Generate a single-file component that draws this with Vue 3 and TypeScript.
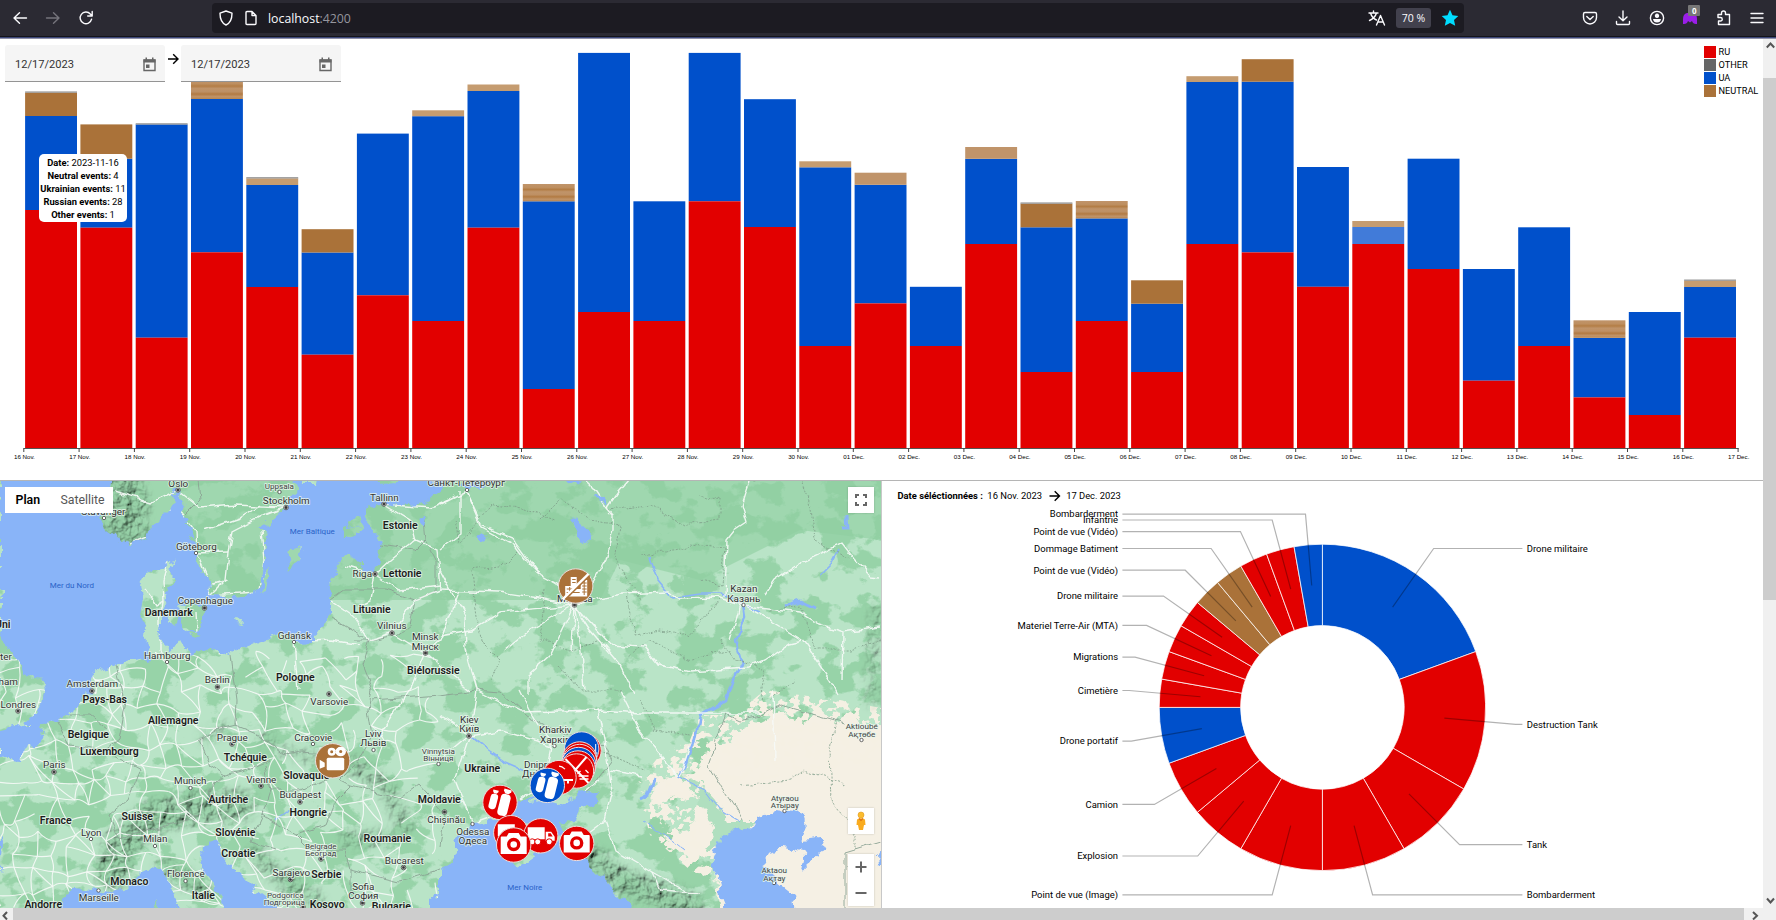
<script setup lang="ts">
type Style = 'solid' | 'light' | 'mid' | 'stripe'
interface Bar { red: number; blue: number; top?: number; style?: Style; cap?: boolean; pale?: boolean }

const base = 448.4
const pitch = 55.3
const raw: [number, number, number?, Style?, boolean?][] = [
  [210, 116, 92.6, 'solid', true], [227.7, 158.7, 124.4, 'solid'], [337.7, 124.4, undefined, undefined, true],
  [252.3, 99, 80, 'stripe'], [287, 185, 178.3, 'light', true], [354.7, 252.5, 229.2, 'solid'],
  [295.3, 133.6], [321, 116.2, 110.3, 'light'], [227.7, 91, 84.5, 'light'], [389, 201.3, 184, 'stripe'],
  [312, 52.9], [321, 201.3], [201.3, 52.9], [227, 99.2], [346, 167.3, 161.3, 'light'],
  [303.4, 184.8, 172.7, 'mid'], [346, 286.8], [244, 158.8, 147, 'mid'], [372, 227.3, 203.6, 'solid', true],
  [321, 218.4, 201, 'stripe'], [372, 303.7, 280.3, 'solid'], [244, 82, 76.2, 'light'], [252.4, 81.7, 59.2, 'solid'],
  [286.8, 167], [244, 227, 221, 'light'], [269, 158.7], [380.7, 269], [346, 227.3],
  [397.4, 337.8, 320.3, 'stripe'], [415, 312], [337.7, 287, 280.7, 'light', true],
]
const bars: Bar[] = raw.map((r, i) => ({ red: r[0], blue: r[1], top: r[2], style: r[3], cap: r[4], pale: i === 24 }))
const barW = 51.9
const barX = (i: number) => 25.1 + i * pitch
const two = (n: number) => String(n).padStart(2, '0')
const ticks = Array.from({ length: 32 }, (_, i) => (i < 15 ? `${16 + i} Nov.` : `${two(i - 14)} Dec.`))
const fills: Record<Style, string> = { solid: '#aa7239', light: '#c59c70', mid: '#c0946a', stripe: 'url(#stripe)' }

const legend = [
  { name: 'RU', color: '#e20000' }, { name: 'OTHER', color: '#666666' },
  { name: 'UA', color: '#0050cb' }, { name: 'NEUTRAL', color: '#aa7239' },
]
const tip = [['Date', '2023-11-16'], ['Neutral events', '4'], ['Ukrainian events', '11'], ['Russian events', '28'], ['Other events', '1']]

// Donut
const R = '#e20000', B = '#0050cb', N = '#aa7239'
const parts: [string, number, string][] = [
  ['Drone militaire', 7, B], ['Destruction Tank', 5, R], ['Tank', 3, R], ['Bombarderment', 3, R],
  ['Point de vue (Image)', 3, R], ['Explosion', 2, R], ['Camion', 2, R], ['Drone portatif', 2, B],
  ['Cimetière', 1, R], ['Migrations', 1, R], ['Materiel Terre-Air (MTA)', 1, R], ['Drone militaire', 1, R],
  ['Point de vue (Vidéo)', 1, N], ['Dommage Batiment', 1, N], ['Point de vue (Vidéo)', 1, R],
  ['Infantrie', 1, R], ['Bombarderment', 1, B],
]
const cx = 1322.4, cy = 707.4
const pt = (deg: number, r: number): [number, number] => {
  const a = (deg * Math.PI) / 180
  return [cx + r * Math.sin(a), cy - r * Math.cos(a)]
}
let acc = 0
const slices = parts.map(([name, n, color]) => {
  const a0 = acc * 10
  acc += n
  const a1 = acc * 10, mid = (a0 + a1) / 2
  const o = 163.2, q = 81.8
  const side = mid < 180 ? 1 : -1
  const elbow = pt(mid, 194)
  return {
    name, color, side, y: elbow[1], tx: cx + side * 204.4,
    d: `M${pt(a0, o)}A${o},${o} 0 0 1 ${pt(a1, o)}L${pt(a1, q)}A${q},${q} 0 0 0 ${pt(a0, q)}Z`,
    line: `${pt(mid, 122.4)} ${elbow} ${cx + side * 200},${elbow[1]}`,
  }
})

// Map
const seas = [
  '0,470 445,470 445,486 432,497 425,503 400,506 380,503 366,508 366,520 374,530 380,540 378,560 376,570 366,573 360,563 350,553 340,560 335,573 330,585 329,605 331,618 325,628 313,636 313,642 300,643 294,640 285,633 270,637 255,643 240,650 228,655 215,650 205,647 192,655 186,650 180,640 170,652 165,645 158,640 160,625 160,610 165,600 168,590 175,577 168,570 174,556 165,568 145,573 140,583 142,600 140,612 145,625 143,635 148,645 150,657 140,660 125,662 115,665 100,668 92,675 90,690 80,700 72,712 62,720 45,724 43,735 38,745 22,750 20,761 0,759',
  '65,908 62,898 75,888 90,890 110,893 125,888 140,872 150,867 160,870 172,885 175,900 178,915 65,915',
  '228,915 215,885 202,870 200,855 208,843 218,840 222,855 235,870 250,885 270,900 280,915',
  '430,915 430,900 440,893 440,872 455,855 455,840 470,826 490,820 510,815 514,803 540,800 560,805 580,795 598,791 597,800 580,808 575,820 560,823 570,845 575,850 590,865 605,880 620,895 634,915',
  '728,833 720,840 711,863 718,880 720,895 728,915 795,915 793,895 780,885 772,870 762,865 770,852 785,848 805,852 800,872 806,865 827,850 820,838 803,840 802,835 806,825 803,815 795,812 775,810 757,820 752,828 735,830',
  '0,833 3,840 2,860 0,875', '881,850 877,855 878,866 881,868',
  '470,480 500,480 478,488 462,488', '568,478 580,478 578,485 570,484',
  '570,518 577,516 584,526 593,533 591,542 584,544 576,532', '475,537 482,532 487,537 481,541',
  '596,491 600,493 606,506 602,505', '208,518 215,512 213,530 206,532', '224,545 232,530 234,532 227,550', '418,520 427,516 425,528 420,525',
]
const islands = [
  '112,470 105,500 101,515 105,530 118,540 130,544 145,538 155,525 165,515 175,505 173,495 178,488 183,500 185,515 190,530 196,545 196,555 200,570 210,585 209,596 235,597 256,592 260,580 262,565 265,545 267,530 255,528 272,520 285,508 290,498 299,490 290,470',
  '0,634 10,650 20,660 25,675 42,678 45,690 42,705 30,715 25,722 35,726 15,725 0,728',
  '180,606 192,600 205,606 203,622 196,634 184,626', '167,612 178,614 177,625 168,622', '190,633 200,636 194,640 187,637',
  '288,560 290,550 302,546 297,560 290,573', '270,565 266,590 262,592 265,575',
  '343,528 362,524 355,535 345,540', '348,519 358,516 360,524 350,526', '236,620 243,621 242,625 237,624',
  '498,834 515,823 535,822 562,836 550,848 532,857 518,867 508,855', '156,908 158,898 161,910', '300,470 318,470 315,482 302,482', '376,470 400,470 396,483 380,484',
]
const dry = '890,722 868,728 850,712 835,722 820,708 800,722 780,712 760,722 738,728 730,745 712,745 705,760 692,775 668,776 650,792 660,808 676,790 700,800 690,830 664,838 690,858 712,855 722,925 890,925'
const delta = '676,774 700,782 716,800 728,822 755,822 745,832 730,833 705,860 714,828 696,796'
const steppe = '636,785 660,755 690,740 700,715 735,715 765,690 800,695 840,700 881,708 881,760 700,790 700,830 730,890 690,870 650,835'

const fixedRoads = [
  '467,492 483,525 512,537 538,573 556,583 574,605', '467,492 482,527 515,545 530,565 540,575', '440,590 500,592 540,598 574,605', '574,605 600,598 620,594 670,592 680,598 717,597 743,605',
  '743,605 760,607 800,612 820,625 843,632 881,627', '725,597 727,540 735,530 747,522 742,505 750,480', '740,605 733,630 730,640', '743,605 770,620 803,640 830,680 838,695', '765,595 775,580 805,560 842,543 855,560 870,577 881,578',
  '593,582 605,560 613,530 613,515 607,508 595,490 585,480', '607,508 618,492 630,478', '574,605 572,650', '574,605 580,640 584,690', '574,605 590,630 620,665 635,695', '574,605 610,645 645,647 660,665 690,672 747,668 765,660 790,643 803,640',
  '574,605 550,655 528,675 528,695', '574,605 530,630 505,650', '574,605 500,612 470,630 440,635', '440,505 467,492', '460,490 460,535 440,550', '440,570 465,618 466,650 477,690 470,735', '477,690 520,712 600,710 640,713 762,713',
  '470,735 500,730 552,746', '520,690 530,710 552,746', '597,708 604,740 612,790 605,820 615,850 652,872 690,893', '620,690 640,730 678,777', '552,746 545,780 520,800', '440,715 470,735 440,760', '470,735 455,780 472,824', '472,824 500,814 560,817', '600,780 570,805 545,810', '605,820 585,835', '610,770 640,776', '843,632 842,680', '680,777 690,745', '773,690 775,760', '652,872 660,890 700,893',
  '384,504 410,520 415,540 390,560 375,574', '384,504 430,508 450,500', '375,574 400,590 440,585', '375,574 370,600 360,605', '332,602 355,618 370,640 392,633', '392,633 425,653 470,690', '425,653 440,640 460,590', '425,653 410,690 380,735', '415,540 437,550 440,590', '345,565 375,574', '294,642 330,640 360,645', '294,642 298,690', '392,633 415,600 440,590',
  '178,490 180,510 195,530 196,553 208,580 210,596', '196,553 228,552', '178,490 200,508 235,505 286,507', '228,552 225,580 210,595 256,592', '228,552 232,532 265,515 286,507', '178,490 150,503 115,492', '130,543 150,535 172,510', '205,530 240,518 260,505', '262,530 265,560 260,590', '210,585 228,580', '168,558 162,580 163,600 160,620 160,650 167,662', '145,590 155,605 163,600', '160,612 190,610', '196,612 197,632',
]
const borders = [
  '198,480 200,500 185,515', '423,520 425,540 415,550 380,545 378,548', '425,540 435,560 435,592 415,600 385,590 345,590 331,600', '415,600 410,625 397,635 370,640 360,635 330,618', '354,640 370,640 362,665 372,690 368,710 372,735 355,765 340,780 350,785 400,798',
  '230,655 232,670 236,700 235,725', '236,725 215,730 199,740 210,765 225,775 245,770 270,760', '235,725 260,735 285,755 300,752 340,755', '225,775 208,790 212,800', '265,765 270,790 262,815 295,835 325,825 335,800 350,785', '270,790 300,790 335,775', '125,700 115,665', '58,722 70,745 105,750 118,740 125,700', '105,750 140,770 128,800 110,815', '110,815 118,838 160,828 200,815', '70,715 90,715 108,730', '262,815 250,842 275,850', '295,835 310,850 345,850 350,870 350,895', '350,870 400,882 440,870', '400,798 418,785 445,815 440,845', '476,690 440,695 372,700', '476,690 500,692 525,715 565,735', '565,735 605,745 612,760 590,790 578,800', '762,715 740,720 725,713 718,735 708,765 720,785 735,808 742,820', '762,715 780,705 805,712 845,723', '845,853 881,842', '845,853 845,908',
]
const dashes = [
  '455,520 460,545 490,505 520,508 555,520', '475,600 472,570 505,565 520,550', '540,520 560,500 590,520 620,525 615,560 640,600', '608,510 650,505 685,525 720,520 720,500 700,495', '710,478 745,480 800,475 810,500 815,540 850,560', '640,555 680,550 690,545 725,548 722,585 700,580', '625,590 635,635 660,630 690,635 720,600', '475,600 480,640 500,660 490,680', '545,590 540,640 570,650 600,640', '625,660 650,640 690,660 730,650', '560,665 580,690 620,690', '720,640 735,660 765,670 760,700', '770,610 800,605 815,650 850,650 881,640', '795,680 770,700', '640,700 655,730 690,735', '590,750 610,755 645,770', '740,785 790,780 805,770 845,785', '835,720 830,750 832,800 855,835 855,850',
]
let seed = 29
const rnd = () => (seed = (seed * 1103515245 + 12345) % 2147483648) / 2147483648
const mesh: string[] = []
const step = 18
const cols = 25, rowsN = 15
const nodes = Array.from({ length: cols * rowsN }, (_, i) => [
  (i % cols) * step + (rnd() - 0.5) * 15, 655 + Math.floor(i / cols) * step + (rnd() - 0.5) * 15,
])
for (let r = 0; r < rowsN; r++) for (let c = 0; c < cols; c++) {
  const a = nodes[r * cols + c]
  const dens = c < 14 ? 0.8 : 0.5
  const link = (b: number[] | undefined, p: number) => {
    if (!b || rnd() > p) return
    mesh.push(`M${a}Q${(a[0] + b[0]) / 2 + (rnd() - 0.5) * 9},${(a[1] + b[1]) / 2 + (rnd() - 0.5) * 9} ${b}`)
  }
  if (c < cols - 1) link(nodes[r * cols + c + 1], dens)
  if (r < rowsN - 1) link(nodes[(r + 1) * cols + c], dens)
  if (c < cols - 1 && r < rowsN - 1) link(nodes[(r + 1) * cols + c + 1], dens * 0.3)
}

type Label = [number, number, string]
const cities: Label[] = [
  [178, 483.5, 'Oslo'], [286, 500.5, 'Stockholm'], [384, 497.5, 'Tallinn'], [466, 482.5, 'Санкт-Петербург'], [196, 547, 'Göteborg'],
  [362, 574, 'Riga'], [205, 601, 'Copenhague'], [391.5, 626, 'Vilnius'], [294, 635.5, 'Gdańsk'], [425, 637, 'Minsk'], [425, 646.5, 'Мінск'],
  [167, 655.5, 'Hambourg'], [217, 680, 'Berlin'], [92, 684, 'Amsterdam'], [103, 512, 'Stavanger'], [18, 704.5, 'Londres'], [54, 765, 'Paris'],
  [329, 702, 'Varsovie'], [232, 737.5, 'Prague'], [313, 738, 'Cracovie'], [373, 734, 'Lviv'], [373, 743, 'Львів'], [190, 781, 'Munich'],
  [261, 779.5, 'Vienne'], [300, 795, 'Budapest'], [91, 833, 'Lyon'], [155, 839, 'Milan'], [404, 860.5, 'Bucarest'], [185.5, 874, 'Florence'],
  [291, 872.5, 'Sarajevo'], [363, 886.5, 'Sofia'], [363, 896, 'София'], [98.5, 898, 'Marseille'], [469, 720, 'Kiev'], [469, 729, 'Київ'],
  [555, 730, 'Kharkiv'], [555, 739.5, 'Харків'], [538, 765, 'Dnipro'], [538, 774, 'Дніпро'], [446, 820, 'Chișinău'], [472.5, 832, 'Odessa'], [472.5, 841, 'Одеса'],
  [743.5, 589, 'Kazan'], [743.5, 598.5, 'Казань'], [574.5, 599, 'Москва'], [-14.5, 656.5, 'Manchester'], [-9, 681.5, 'Birmingham'],
]
const small: Label[] = [
  [279, 486, 'Uppsala'], [438, 751, 'Vinnytsia'], [438, 758, 'Вінниця'], [320.5, 846, 'Belgrade'], [320.5, 853.5, 'Београд'],
  [285, 895.5, 'Podgorica'], [284, 902, 'Подгорица'], [861.5, 726.5, 'Aktioubé'], [861.5, 734, 'Ақтөбе'],
  [784.5, 798, 'Atyraou'], [784.5, 805, 'Атырау'], [774, 870.5, 'Aktaou'], [774, 878, 'Ақтау'],
]
const countries: Label[] = [
  [400, 525.5, 'Estonie'], [402, 573.5, 'Lettonie'], [371.5, 610, 'Lituanie'], [433, 670.5, 'Biélorussie'], [168.5, 612.5, 'Danemark'],
  [295, 677.5, 'Pologne'], [104.5, 699.5, 'Pays-Bas'], [173, 721, 'Allemagne'], [88, 734.5, 'Belgique'], [109, 751.5, 'Luxembourg'],
  [245, 757.5, 'Tchéquie'], [306, 776, 'Slovaquie'], [228, 800, 'Autriche'], [308, 813, 'Hongrie'], [55.5, 821, 'France'], [137, 817, 'Suisse'],
  [235, 833, 'Slovénie'], [238, 854, 'Croatie'], [387, 839, 'Roumanie'], [326, 874.5, 'Serbie'], [129, 881.5, 'Monaco'], [203, 896, 'Italie'],
  [43, 905, 'Andorre'], [327, 904.5, 'Kosovo'], [391, 906.5, 'Bulgarie'], [439, 799.5, 'Moldavie'], [482, 769, 'Ukraine'], [2.5, 625, 'Uni'],
]
const waters: Label[] = [[71.5, 586, 'Mer du Nord'], [312, 531.5, 'Mer Baltique'], [524.5, 888, 'Mer Noire']]
const capitals = [[178, 490], [286, 507.5], [384, 504], [375, 574], [204.5, 608], [392, 633], [425.5, 653], [217.5, 687], [92, 691], [18, 711], [54, 772], [329, 694], [232, 744], [261, 786], [300, 802], [321, 859], [403.5, 867.5], [290.5, 879.5], [362.5, 903], [303, 907], [469, 736], [444.5, 812], [574.5, 605]]
const towns = [[279.5, 492], [467, 490], [196, 553], [294, 642], [167, 662], [104, 518], [313, 744], [373.5, 750], [438.5, 764], [190.5, 788], [91, 839], [155, 846], [185.5, 881], [98.5, 890.5], [554.5, 746], [472.5, 824], [743.5, 605], [861.5, 740], [784.5, 811], [774, 883]]
const pins: [number, number, string, string][] = [
  [584, 750.5, R, ''], [581.7, 749, B, 'drone'], [579.6, 759, R, ''], [579.6, 761.5, R, 'gun'], [578.6, 764.5, B, 'gun'], [578, 768, R, ''],
  [576.5, 771, R, 'slash'], [559, 777.6, R, 'gun'], [547.3, 785.4, B, 'shell'], [500, 802.4, R, 'shell'],
  [510.8, 832.7, R, 'truck'], [540.7, 835.8, R, 'truck'], [513.7, 845, R, 'photo'], [576.7, 843.4, R, 'photo'],
  [332.7, 760.8, N, 'cine'], [575.7, 586, N, 'city'],
]
</script>

<template>
  <div class="window">
    <header class="chrome">
      <nav class="nav">
        <svg width="16" height="16" viewBox="0 0 16 16"><path d="M14.500 8H2M7.500 2.800 2 8l5.500 5.200" /></svg>
        <svg class="dim" width="16" height="16" viewBox="0 0 16 16"><path d="M1.500 8H14M8.500 2.800 14 8l-5.500 5.200" /></svg>
        <svg width="16" height="16" viewBox="0 0 16 16"><path d="M13.600 9.200A5.800 5.800 0 1 1 12.300 4L14 5.800M14.200 1.500V6H9.700" /></svg>
      </nav>
      <div class="url">
        <svg width="16" height="16" viewBox="0 0 16 16"><path d="M8 1 14 3.200C14 9 12.500 13 8 15 3.500 13 2 9 2 3.200Z" /></svg>
        <svg class="doc" width="14" height="16" viewBox="0 0 14 16"><path d="M2 2.500Q2 1.500 3 1.500H8L12 5.500V13.500Q12 14.500 11 14.500H3Q2 14.500 2 13.500ZM8 1.500V5.500H12" /></svg>
        <span class="host">localhost<i>:4200</i></span>
        <svg class="push" width="18" height="16" viewBox="0 0 18 16"><path d="M1 3H10M5.500 1V3M2.500 3Q4 8 8.500 10M8.500 3Q7 8 1.500 10.500M8.500 15 12.500 5.500 16.500 15M10 12H15" /></svg>
        <span class="zoom">70 %</span>
        <svg class="star" width="18" height="18" viewBox="0 0 18 18"><path d="M9 .8 11.500 6.200 17.300 6.900 13 11 14.200 16.800 9 13.900 3.800 16.800 5 11 .7 6.900 6.500 6.200Z" /></svg>
      </div>
      <div class="tools">
        <svg width="16" height="16" viewBox="0 0 16 16"><path d="M3 2.500H13Q14.500 2.500 14.500 4V7.500A6.500 6.500 0 0 1 1.500 7.500V4Q1.500 2.500 3 2.500ZM4.800 6.500 8 9.500 11.200 6.500" /></svg>
        <svg width="16" height="16" viewBox="0 0 16 16"><path d="M8 1V10.500M4 7 8 10.800 12 7M1.500 11.500V13.500Q1.500 14.500 2.500 14.500H13.500Q14.500 14.500 14.500 13.500V11.500" /></svg>
        <svg width="16" height="16" viewBox="0 0 16 16"><circle cx="8" cy="8" r="6.600" /><path class="full" d="M8 3.600A2.200 2.200 0 1 1 7.990 3.600M4 9H12Q11.500 12.500 8 12.500T4 9" /></svg>
        <span class="addon"><svg width="16" height="16" viewBox="0 0 16 16"><path d="M1 9Q1 4 5 3L11 3Q15 4 15 9V14Q11 14.500 10 11L8 12.500 6 11Q5 14.500 1 14Z" /></svg><b>0</b></span>
        <svg width="16" height="16" viewBox="0 0 16 16"><path d="M2 4.500H5.500V3A1.800 1.800 0 0 1 9.500 3V4.500H13.500V14.500H2.500V11H4.500A1.700 1.700 0 0 0 4.500 7.500H2Z" /></svg>
        <svg width="14" height="16" viewBox="0 0 14 16"><path d="M1 3.500H13M1 8H13M1 12.500H13" /></svg>
      </div>
    </header>

    <div class="body">
      <main class="page">
        <section class="timeline">
          <svg class="chart" width="1763" height="441" viewBox="0 39 1763 441">
            <defs>
              <linearGradient id="stripe" x1="0" y1="0" x2="0" y2="1">
                <stop offset="0" stop-color="#c0946a" /><stop offset=".2" stop-color="#be8f60" /><stop offset=".32" stop-color="#b37d45" />
                <stop offset=".45" stop-color="#c0946a" /><stop offset=".62" stop-color="#be9064" /><stop offset=".74" stop-color="#b27a42" /><stop offset=".88" stop-color="#c0946a" /><stop offset="1" stop-color="#b7854f" />
              </linearGradient>
            </defs>
            <g v-for="(b, i) in bars" :key="i">
              <rect :x="barX(i)" :y="b.blue" :width="barW" :height="b.red - b.blue" :fill="b.pale ? '#417bd9' : '#0050cb'" />
              <rect :x="barX(i)" :y="b.red" :width="barW" :height="base - b.red" fill="#e20000" />
              <rect v-if="b.top && b.style" :x="barX(i)" :y="b.top" :width="barW" :height="b.blue - b.top" :fill="fills[b.style]" />
              <rect v-if="b.cap" :x="barX(i)" :y="(b.top || b.blue) - 1.2" :width="barW" height="1.4" fill="#999" />
            </g>
            <path d="M23.800 448.500H1738.500" stroke="#555" stroke-width="1" />
            <g v-for="(t, i) in ticks" :key="t">
              <path :d="`M${23.8 + i * pitch} 448v4`" stroke="#444" stroke-width="1" />
              <text class="tick" :x="24.4 + i * pitch" y="459.400">{{ t }}</text>
            </g>
          </svg>
          <div class="dates">
            <div v-for="n in 2" :key="n" class="date">
              <span>12/17/2023</span>
              <svg width="13" height="15" viewBox="0 0 13 15"><path d="M1 3H12V13.500H1Z" fill="none" stroke="#666" stroke-width="1.400" /><path d="M.5 2.500H12.500V5.500H.5ZM2.500.5H4V3H2.500ZM9 .5H10.500V3H9ZM3 7.500H6.500V11H3Z" fill="#666" /></svg>
            </div>
            <svg class="arrow" width="11" height="12" viewBox="0 0 11 12"><path d="M0 6H10M5.200 1.200 10 6 5.200 10.800" /></svg>
          </div>
          <div class="tip"><p v-for="t in tip" :key="t[0]"><b>{{ t[0] }}:</b> {{ t[1] }}</p></div>
          <ul class="legend"><li v-for="l in legend" :key="l.name"><i :style="{ background: l.color }"></i>{{ l.name }}</li></ul>
        </section>

        <div class="lower">
          <section class="map">
            <svg width="881" height="427" viewBox="0 481 881 427">
              <defs>
                <filter id="veg" x="0" y="0" width="100%" height="100%" color-interpolation-filters="sRGB">
                  <feTurbulence type="fractalNoise" baseFrequency=".028 .035" numOctaves="5" seed="8" />
                  <feColorMatrix values="0 0 0 0 .56  0 0 0 0 .81  0 0 0 0 .63  16 0 0 0 -8.100" />
                </filter>
                <filter id="relief" x="0" y="0" width="100%" height="100%">
                  <feTurbulence type="fractalNoise" baseFrequency=".1" numOctaves="4" seed="3" result="n" />
                  <feColorMatrix in="n" values="0 0 0 0 0  0 0 0 0 0  0 0 0 0 0  1 0 0 0 0" />
                  <feDiffuseLighting surfaceScale="6" diffuseConstant="1.100" lighting-color="#93cba3"><feDistantLight azimuth="225" elevation="52" /></feDiffuseLighting>
                </filter>
                <filter id="specks" x="0" y="0" width="100%" height="100%" color-interpolation-filters="sRGB">
                  <feTurbulence type="fractalNoise" baseFrequency=".1 .12" numOctaves="3" seed="14" />
                  <feColorMatrix values="0 0 0 0 .96  0 0 0 0 .94  0 0 0 0 .89  22 0 0 0 -11.300" />
                </filter>
                <filter id="coast" x="-5%" y="-5%" width="110%" height="110%" color-interpolation-filters="sRGB">
                  <feTurbulence type="fractalNoise" baseFrequency=".09" numOctaves="4" seed="5" />
                  <feDisplacementMap in="SourceGraphic" scale="12" xChannelSelector="R" yChannelSelector="G" />
                </filter>
                <filter id="wiggle" x="-5%" y="-5%" width="110%" height="110%" color-interpolation-filters="sRGB">
                  <feTurbulence type="fractalNoise" baseFrequency=".07" numOctaves="2" seed="7" />
                  <feDisplacementMap in="SourceGraphic" scale="8" xChannelSelector="R" yChannelSelector="G" />
                </filter>
                <filter id="soft"><feGaussianBlur stdDeviation="5" /></filter>
                <clipPath id="steppe"><polygon :points="steppe" /></clipPath>
                <mask id="land" maskUnits="userSpaceOnUse" x="-10" y="470" width="901" height="450">
                  <g filter="url(#coast)">
                    <rect x="-20" y="460" width="921" height="470" fill="#fff" />
                    <polygon v-for="(s, i) in seas" :key="i" :points="s" fill="#000" />
                    <polygon v-for="(s, i) in islands" :key="'i' + i" :points="s" fill="#fff" />
                  </g>
                </mask>
                <mask id="hills" maskUnits="userSpaceOnUse" x="-10" y="470" width="901" height="450">
                  <g fill="none" stroke="#fff" stroke-linecap="round" stroke-linejoin="round" filter="url(#soft)">
                    <path d="M115 470 128 505 125 530" stroke-width="40" />
                    <path d="M112 875 118 845 150 818 195 808 240 805" stroke-width="30" />
                    <path d="M350 765 385 785 405 825 M385 838 348 838" stroke-width="16" stroke-opacity=".7" />
                    <path d="M255 855 295 890 315 900M165 868 205 890" stroke-width="17" stroke-opacity=".7" />
                    <path d="M590 858 620 880 690 905" stroke-width="24" />
                    <path d="M876 610 872 700M290 752 330 765M205 738 225 728M262 735 280 750" stroke-width="12" stroke-opacity=".5" />
                  </g>
                </mask>
              </defs>
              <rect y="481" width="881" height="427" fill="#89b4f8" />
              <g mask="url(#land)">
                <rect y="470" width="881" height="450" fill="#b9e4c7" />
                <path d="M110 470H300V600H190V540L110 545ZM330 470H881V540L800 530 700 580 620 560 600 600 330 600Z" fill="#94d2a5" opacity=".7" />
                <rect y="470" width="881" height="450" filter="url(#veg)" opacity=".8" />
                <g filter="url(#coast)"><polygon :points="dry" fill="#f5f0e4" /><polygon :points="delta" fill="#b0dfbf" /></g>
                <g clip-path="url(#steppe)"><rect x="630" y="680" width="251" height="215" filter="url(#specks)" /></g>
                <g mask="url(#hills)" opacity=".85"><rect y="470" width="881" height="450" filter="url(#relief)" /></g>
                <g class="river" filter="url(#wiggle)">
                  <polyline points="743,605 745,618 735,640 742,665 733,680 726,700 700,715 695,740 685,765 678,778" stroke-width="2.600" />
                  <polyline points="680,778 705,790 720,810 740,822" stroke-width="1.200" />
                  <polyline points="650,555 658,580 672,597 700,593 720,593 743,605 760,612" stroke-width="1.600" />
                  <polyline points="785,606 800,601 815,608" stroke-width="3" /><polyline points="820,575 830,565 838,550" stroke-width="1.600" />
                  <polyline points="847,515 848,528 842,528" stroke-width="3" />
                  <polyline points="470,735 488,750 505,762 535,775 545,790 522,802 508,812" stroke-width="1.800" />
                  <polyline points="655,777 648,795 640,799" stroke-width="3" />
                  <polyline points="643,822 665,835 685,850" stroke-width="1" /><polyline points="275,820 290,810" stroke-width="1.500" />
                </g>
                <g class="dash" filter="url(#wiggle)"><polyline v-for="(d, i) in dashes" :key="i" :points="d" /></g>
                <g class="mesh"><path v-for="(d, i) in mesh" :key="i" :d="d" /></g>
                <g class="border" filter="url(#wiggle)"><polyline v-for="(d, i) in borders" :key="i" :points="d" /></g>
                <g class="road" filter="url(#wiggle)"><polyline v-for="(d, i) in fixedRoads" :key="i" :points="d" /></g>
              </g>
              <g class="town"><circle v-for="(t, i) in towns" :key="i" :cx="t[0]" :cy="t[1]" r="1.700" /></g>
              <g class="capital"><g v-for="(t, i) in capitals" :key="i"><circle :cx="t[0]" :cy="t[1]" r="2.300" /><circle class="core" :cx="t[0]" :cy="t[1]" r="1.200" /></g></g>
              <g transform="translate(.3 -.3)">
                <g class="label city"><text v-for="(l, i) in cities" :key="i" :x="l[0]" :y="l[1]" dy=".35em">{{ l[2] }}</text></g>
                <g class="label small"><text v-for="(l, i) in small" :key="i" :x="l[0]" :y="l[1]" dy=".35em">{{ l[2] }}</text></g>
                <g class="label country"><text v-for="(l, i) in countries" :key="i" :x="l[0]" :y="l[1]" dy=".35em">{{ l[2] }}</text></g>
                <g class="label water"><text v-for="(l, i) in waters" :key="i" :x="l[0]" :y="l[1]" dy=".35em">{{ l[2] }}</text></g>
              </g>
              <g v-for="(p, i) in pins" :key="'p' + i" :transform="`translate(${p[0]} ${p[1]})`">
                <circle r="17.200" :fill="p[2]" stroke="#eadfdf" stroke-width="1" />
                <g v-if="p[3] === 'photo'"><path d="M-12-8.500H-7L-5-12H5L7-8.500H12Q13-8.500 13-7.500V9H-13V-7.500Q-13-8.500-12-8.500Z" fill="#fff" /><circle r="5" cy="-.5" fill="none" :stroke="p[2]" stroke-width="3.400" /></g>
                <g v-else-if="p[3] === 'truck'"><path d="M-13-8.500H4V3.500H-13ZM5-4H10.500L14 1V5H5Z" fill="#fff" /><path d="M7.500-2.500H10L12 .8H7.500Z" :fill="p[2]" /><g fill="#fff" :stroke="p[2]"><circle cx="-8.500" cy="6" r="3" /><circle cx="-3" cy="6" r="3" /><circle cx="8.500" cy="6" r="3" /></g></g>
                <g v-else-if="p[3] === 'shell'" fill="#fff"><g transform="rotate(14)"><rect x="-10.500" y="-7" width="7.500" height="15.500" rx="3.200" /><path d="M-9.500-11H-4V-9.500L-5.500-7.500H-8L-9.500-9.500Z" /><rect x="-.5" y="-9.500" width="10" height="22" rx="4" /><path d="M1-14.500H8.500V-12.500L6.500-10H3L1-12.500Z" /></g></g>
                <g v-else-if="p[3] === 'cine'" fill="#fff"><rect x="-6" y="-3" width="17.500" height="12.500" rx="1.500" /><path d="M-13-1-8 2V6L-13 8Z" /><path d="M-1-13A4 4 0 1 0-1-5A4 4 0 1 0-1-13M-1-10.500A1.500 1.500 0 1 1-1-7.500A1.500 1.500 0 1 1-1-10.500M8-14A4.800 4.300 0 1 0 8-4.500A4.800 4.300 0 1 0 8-14M8-10.800A1.600 1.500 0 1 1 8-7.800A1.600 1.500 0 1 1 8-10.800" fill-rule="evenodd" /></g>
                <g v-else-if="p[3] === 'city'"><path d="M-10.500 0H-5V-9H1V3H5V-6H11.500V10.500H-10.500Z" fill="#fff" /><path d="M-9 3H-1M-9 6.500H4M-3.500-6.500H0M-3.500-3.500H0M6.500-3H11M6.500 0H11M6.500 3H11M6.500 6H11M-6 1V10M8.500-5V9" :stroke="p[2]" stroke-width="1" /><path d="M-13 13.500 13-12" stroke="#fff" stroke-width="2.800" /><path d="M-10.500 13.500 14-10.500" :stroke="p[2]" stroke-width="1.500" /></g>
                <g v-else-if="p[3] === 'slash'" fill="none" stroke="#fff"><path d="M-11-12 12 12M-3 1 10-14" stroke-width="2" /><path d="M2 5H12M3 8H12M9-1 12 2M1 3 4 0" stroke-width="1.300" /></g>
                <g v-else-if="p[3] === 'gun'" stroke="#fff" fill="none"><path d="M0-11.500Q3-11.500 6-8.500" stroke-width="1.200" /><path d="M2 2.500H14M9 2V6" stroke-width="2" /></g>
                <path v-else-if="p[3] === 'drone'" d="M14-5V5M12 4H16" stroke="#fff" stroke-width="1" />
              </g>
            </svg>
            <div class="types"><b>Plan</b><span>Satellite</span></div>
            <button class="ctl fs"><svg width="12" height="12" viewBox="0 0 12 12"><path d="M1 4V1H4M8 1H11V4M11 8V11H8M4 11H1V8" /></svg></button>
            <button class="ctl peg"><svg width="14" height="20" viewBox="0 0 14 20"><circle cx="7" cy="4" r="3" fill="#fbbc2d" stroke="#e09a20" stroke-width=".6" /><path d="M3 8.500Q7 6 11 8.500L11.500 14H10L9 19H5L4 14H2.500Z" fill="#f9ab1f" /><path d="M5 7.500 7 9.500 9 7.500" fill="none" stroke="#df7413" stroke-width="1.200" /></svg></button>
            <div class="ctl zoomer"><svg width="26" height="52" viewBox="0 0 26 52"><path d="M7.500 13H18.500M13 7.500V18.500M7.500 39H18.500" /></svg></div>
          </section>

          <section class="donut">
            <p class="range"><b>Date séléctionnées :</b><span>16 Nov. 2023</span><svg width="12" height="12" viewBox="0 0 11 12"><path d="M0 6H10M5.200 1.200 10 6 5.200 10.800" /></svg><span>17 Dec. 2023</span></p>
            <svg class="pie" width="881" height="427" viewBox="882 481 881 427">
              <path v-for="(s, i) in slices" :key="i" :d="s.d" :fill="s.color" stroke="#fff" stroke-opacity=".75" stroke-width="1" />
              <g v-for="(s, i) in slices" :key="'l' + i">
                <polyline :points="s.line" fill="none" stroke="#000" stroke-opacity=".3" stroke-width="1.200" />
                <text class="name" :x="s.tx" :y="s.y" dy=".35em" :text-anchor="s.side > 0 ? 'start' : 'end'">{{ s.name }}</text>
              </g>
            </svg>
          </section>
        </div>
      </main>
      <aside class="vbar">
        <svg width="13" height="13" viewBox="0 0 13 13"><path d="M3.800 8.500 7.500 4.500 11.200 8.500" /></svg>
        <i></i>
        <svg class="down" width="13" height="13" viewBox="0 0 13 13"><path d="M4 4.500 7.500 8.500 11 4.500" /></svg>
      </aside>
    </div>
    <footer class="hbar">
      <svg width="13" height="12" viewBox="0 0 13 12"><path d="M7 4 3.500 7.800 7 11.500" /></svg>
      <i></i>
      <svg width="19" height="12" viewBox="0 0 19 12"><path d="M9 4 13 7.800 9 11.500" /></svg>
    </footer>
  </div>
</template>

<style>
html, body { margin: 0; overflow: hidden; }
</style>
<style scoped>
.window { width: 1776px; height: 920px; display: flex; flex-direction: column; overflow: hidden; background: #fff; font-family: Roboto, sans-serif; color: #000; }
.window svg { display: block; flex: none; }
.chrome { height: 39px; box-sizing: border-box; background: #2b2a33; display: flex; align-items: flex-start; box-shadow: inset 0 -1px #8e90a8, inset 0 -2px #3c4778, inset 0 -3px #14141a; flex: none; }
.chrome svg { fill: none; stroke: #fbfbfe; stroke-width: 1.4; stroke-linejoin: round; stroke-linecap: round; }
.nav { width: 200px; padding: 10px 0 0 12px; display: flex; gap: 17px; }
.nav .dim { stroke: #75747c; }
.url { width: 1252px; height: 30px; margin-top: 3px; box-sizing: border-box; padding: 0 5px 0 6px; background: #1c1b22; border-radius: 4px; display: flex; align-items: center; }
.doc { margin-left: 10px; }
.host { margin-left: 10px; font: 12.3px "Open Sans", sans-serif; color: #fbfbfe; }
.host i { font-style: normal; color: #96959e; }
.push { margin-left: auto; }
.zoom { width: 35px; height: 20px; margin: 0 10px; background: #42414d; border-radius: 3px; color: #fbfbfe; font: 10.5px/20px "Open Sans", sans-serif; text-align: center; }
.url .star { fill: #00ddff; stroke: none; }
.tools { margin-left: auto; padding: 10px 12.500px 0 0; display: flex; gap: 17.600px; }
.tools .full { fill: #fbfbfe; stroke: none; }
.addon { position: relative; }
.addon svg { fill: #9a1ee8; stroke: none; }
.addon b { position: absolute; left: 6px; top: -5px; width: 12px; height: 11px; background: #777; color: #fff; font: bold 8px/11px "Open Sans", sans-serif; text-align: center; border-radius: 1px; }
.body { flex: 1; display: flex; min-height: 0; }
.page { width: 1763px; }
.timeline { position: relative; height: 441px; }
.tick { font: 6.2px "Liberation Sans", Arial, sans-serif; text-anchor: middle; fill: #000; }
.dates { position: absolute; left: 5px; top: 6px; display: flex; gap: 16px; }
.date { width: 160px; height: 37px; box-sizing: border-box; padding: 2px 9px 0 10px; background: #f5f5f5; border-bottom: 1px solid #949494; border-radius: 3px 3px 0 0; display: flex; align-items: center; justify-content: space-between; font-size: 11.1px; color: #333; }
.arrow { position: absolute; left: 163px; top: 8px; }
.arrow, .range svg { fill: none; stroke: #000; stroke-width: 1.4; }
.tip { position: absolute; left: 39px; top: 115px; width: 88px; height: 68px; box-sizing: border-box; padding-top: 1.500px; background: #fff; border-radius: 5px; font-size: 9.350px; line-height: 13px; text-align: center; white-space: nowrap; }
.tip p { margin: 0; }
.legend { position: absolute; left: 1704px; top: 6px; margin: 0; padding: 0; list-style: none; font-size: 9.200px; }
.legend li { height: 13px; display: flex; align-items: center; gap: 3px; }
.legend i { width: 11.500px; height: 12px; }
.lower { height: 428px; box-sizing: border-box; border-top: 1px solid #b5b5b5; display: flex; }
.map { position: relative; width: 881px; border-right: 1px solid #c8c8c8; overflow: hidden; }
.river { fill: none; stroke: #89b4f8; stroke-linejoin: round; }
.mesh, .road { fill: none; stroke: #f6faf7; stroke-width: 1.150; stroke-opacity: .9; }
.road { stroke-width: 1.400; }
.border { fill: none; stroke: #8ba394; stroke-width: .9; }
.dash { fill: none; stroke: #7f9d89; stroke-width: .8; stroke-dasharray: 2 1.500; }
.town { fill: #fff; stroke: #444; stroke-width: .8; }
.capital { fill: #fff; stroke: #444; stroke-width: .8; }
.capital .core { fill: #333; }
.label { text-anchor: middle; paint-order: stroke; stroke: #e8f6ec; stroke-width: 1.800px; stroke-linejoin: round; stroke-opacity: .8; fill: #333; }
.city { font-size: 9.900px; }
.small { font-size: 8.100px; fill: #444; }
.country { font-size: 10.500px; font-weight: 600; fill: #1c1c1c; }
.water { font-size: 8px; fill: #2a63c8; stroke: none; }
.types { position: absolute; left: 5px; top: 6px; width: 108px; height: 26px; background: #fff; display: flex; align-items: center; font-size: 12.300px; color: #565656; }
.types b { font-weight: 600; color: #000; width: 33px; margin-left: 10.500px; }
.types span { margin-left: 12px; }
.ctl { position: absolute; right: 7px; width: 26px; height: 26px; padding: 0; border: 0; background: #fff; display: flex; align-items: center; justify-content: center; box-shadow: 0 0 2px #0003; }
.ctl > svg { fill: none; stroke: #666; stroke-width: 2; }
.fs { top: 6px; }
.peg { top: 327px; }
.peg > svg { stroke: none; }
.zoomer { top: 373px; height: 52px; }
.donut { position: relative; width: 881px; }
.range { position: absolute; left: 15.500px; top: 8px; margin: 0; display: flex; align-items: center; font-size: 9.400px; line-height: 13px; white-space: nowrap; }
.range span { margin-left: 4.500px; }
.range svg { margin: 0 1px 0 6.500px; }
.name { font-size: 9.450px; fill: #000; }
.vbar { width: 13px; background: #f0f0f0; display: flex; flex-direction: column; }
.vbar i { margin-top: 26px; height: 522px; background: #cdcdcd; }
.vbar svg, .hbar svg { fill: none; stroke: #555; stroke-width: 2; }
.vbar .down { margin-top: auto; margin-bottom: 1px; }
.hbar { height: 12px; background: #f0f0f0; display: flex; flex: none; }
.hbar i { width: 1731px; background: #cdcdcd; }
</style>
